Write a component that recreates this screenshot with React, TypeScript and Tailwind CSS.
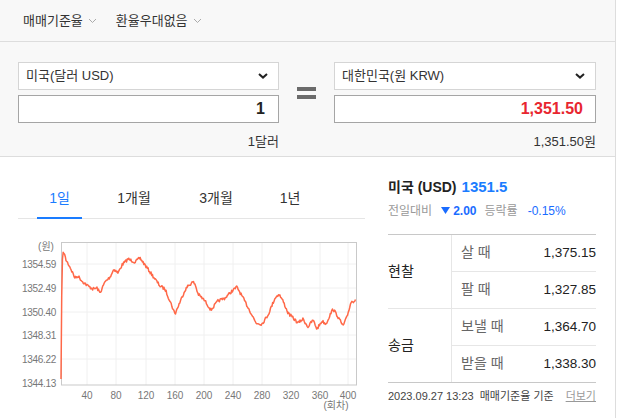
import React from "react";

const FONT = "font-['Liberation_Sans','Noto_Sans_CJK_KR',sans-serif]";

const KEYS: [number, number][] = [
  [61, 378], [62, 262], [63.5, 250], [66, 259], [70, 266], [75, 277], [78, 275], [82, 280],
  [88, 285], [93, 288], [97, 287], [100, 292], [105, 281], [110, 276], [114, 268], [118, 272],
  [122, 264], [128, 258], [135, 261], [140, 257], [145, 264], [150, 271], [155, 278], [160, 285],
  [165, 288], [170, 300], [175, 313], [180, 301], [185, 289], [188, 285], [193, 281], [195, 283],
  [198, 293], [205, 300], [211, 309], [218, 300], [225, 297], [232, 290], [237, 286], [243, 297],
  [250, 310], [256, 322], [262, 323], [268, 314], [275, 297], [279, 293], [283, 300], [288, 312],
  [294, 318], [298, 322], [303, 318], [308, 326], [313, 319], [317, 328], [322, 320], [326, 323],
  [330, 314], [333, 308], [337, 314], [343, 325], [347, 316], [351, 301], [354, 300], [356, 297],
];

function buildLine() {
  let seed = 7;
  const rand = () => {
    seed = (seed * 16807) % 2147483647;
    return seed / 2147483647;
  };
  const pts: string[] = [];
  for (let x = 61; x <= 356; x += 0.72) {
    let i = 0;
    while (i < KEYS.length - 2 && KEYS[i + 1][0] < x) i++;
    const [x0, y0] = KEYS[i];
    const [x1, y1] = KEYS[i + 1];
    const t = Math.min(1, Math.max(0, (x - x0) / (x1 - x0)));
    const noise = x < 62.5 ? 0 : (rand() - 0.5) * 3;
    pts.push(`${x.toFixed(2)},${(y0 + (y1 - y0) * t + noise).toFixed(2)}`);
  }
  return pts.join(" ");
}

const LINE = buildLine();

const Y_LABELS: [string, number][] = [
  ["1354.59", 263],
  ["1352.49", 287],
  ["1350.40", 311],
  ["1348.31", 334],
  ["1346.22", 358],
  ["1344.13", 382],
];
const X_LABELS: [string, number][] = [
  ["40", 87], ["80", 116], ["120", 146], ["160", 175], ["200", 204],
  ["240", 233], ["280", 262], ["320", 291], ["360", 320], ["400", 348],
];

function SmallChevron() {
  return (
    <svg width="9" height="6" viewBox="0 0 9 6" className="ml-[5px] mt-[1px]">
      <path d="M1 1l3.5 3.5L8 1" fill="none" stroke="#aaa" strokeWidth="1" />
    </svg>
  );
}

function SelectBox({ label }: { label: string }) {
  return (
    <div className="flex h-[28px] items-center justify-between border border-[#d5d5d5] bg-white pl-[7px] pr-[10px]">
      <span className="text-[13px] text-[#333]">{label}</span>
      <svg width="10" height="6" viewBox="0 0 10 6">
        <path d="M1 1l4 3.6L9 1" fill="none" stroke="#222" strokeWidth="2" />
      </svg>
    </div>
  );
}

function Chart() {
  return (
    <svg width="347" height="190" viewBox="18 228 347 190" className="mt-[10px] block">
      {Y_LABELS.slice(0, 5).map(([, y]) => (
        <line key={y} x1="61" x2="356" y1={y} y2={y} stroke="#f0f0f0" strokeWidth="1" />
      ))}
      {X_LABELS.map(([, x]) => (
        <line key={x} x1={x} x2={x} y1="241" y2="384" stroke="#f0f0f0" strokeWidth="1" />
      ))}
      <rect x="61.5" y="241.5" width="295" height="142.5" fill="none" stroke="#c9c9c9" strokeWidth="1" />
      <polyline points={LINE} fill="none" stroke="#ff6848" strokeWidth="1.5" strokeLinejoin="round" />
      <g fontSize="10" fill="#777" fontFamily="Liberation Sans, Noto Sans CJK KR, sans-serif">
        <text x="46" y="249" textAnchor="middle">(원)</text>
        {Y_LABELS.map(([t, y]) => (
          <text key={t} x="56" y={y + 4} textAnchor="end" letterSpacing="-0.3">{t}</text>
        ))}
        {X_LABELS.map(([t, x]) => (
          <text key={t} x={x} y="398" textAnchor="middle">{t}</text>
        ))}
        <text x="336" y="408" textAnchor="middle">(회차)</text>
      </g>
    </svg>
  );
}

const ROWS = [
  { group: "현찰", items: [["살 때", "1,375.15"], ["팔 때", "1,327.85"]] },
  { group: "송금", items: [["보낼 때", "1,364.70"], ["받을 때", "1,338.30"]] },
];

export default function App() {
  return (
    <div className={`${FONT} h-[418px] w-[617px] overflow-hidden bg-white`}>
      <div className="h-[418px] w-[616px] border-r border-[#ddd]">
        <div className="flex h-[42px] items-center gap-[19px] border-b border-[#ddd] bg-[#f8f8f8] pl-[23px]">
          <div className="flex items-center text-[13px] text-[#333]">
            매매기준율 <SmallChevron />
          </div>
          <div className="flex items-center text-[13px] text-[#333]">
            환율우대없음 <SmallChevron />
          </div>
        </div>

        <div className="flex h-[115px] items-start border-b border-[#ddd] bg-[#f8f8f8] px-[18px] pt-[20px]">
          <div className="w-[261px]">
            <SelectBox label="미국(달러 USD)" />
            <div className="mt-[5px] flex h-[28px] items-center justify-end border border-[#a5a5a5] bg-white pr-[13px] text-[16px] font-bold text-[#222]">
              1
            </div>
            <div className="mt-[9px] text-right text-[13px] text-[#333]">1달러</div>
          </div>
          <div className="mx-[18px] mt-[25px] flex w-[19px] flex-col gap-[4px]">
            <div className="h-[4px] bg-[#6b6b6b]" />
            <div className="h-[4px] bg-[#6b6b6b]" />
          </div>
          <div className="w-[262px]">
            <SelectBox label="대한민국(원 KRW)" />
            <div className="mt-[5px] flex h-[28px] items-center justify-end border border-[#a5a5a5] bg-white pr-[12px] text-[16px] font-bold text-[#e8262f]">
              1,351.50
            </div>
            <div className="mt-[9px] text-right text-[13px] text-[#333]">1,351.50원</div>
          </div>
        </div>

        <div className="flex pl-[18px]">
          <div className="w-[347px]">
            <div className="flex h-[62px] items-end border-b border-[#e5e5e5] pl-[19px]">
              <div className="relative flex h-[30px] w-[45px] items-start justify-center text-[14px] leading-[20px] text-[#1a7cff]">
                1일
                <div className="absolute bottom-[-1px] left-0 right-0 h-[2px] bg-[#1a7cff]" />
              </div>
              <div className="ml-[22px] flex h-[30px] w-[60px] items-start justify-center text-[14px] leading-[20px] text-[#333]">1개월</div>
              <div className="ml-[22px] flex h-[30px] w-[60px] items-start justify-center text-[14px] leading-[20px] text-[#333]">3개월</div>
              <div className="ml-[20px] flex h-[30px] w-[48px] items-start justify-center text-[14px] leading-[20px] text-[#333]">1년</div>
            </div>
            <Chart />
          </div>

          <div className="ml-[23px] w-[208px]">
            <div className="mt-[19px] flex items-baseline whitespace-nowrap">
              <span className="text-[14px] font-bold text-[#222]">미국 (USD)</span>
              <span className="ml-[5px] text-[15px] font-bold text-[#1a7cff]">1351.5</span>
            </div>
            <div className="mt-[3px] flex items-center whitespace-nowrap text-[12px]">
              <span className="text-[#999]">전일대비</span>
              <svg width="9" height="7" viewBox="0 0 9 7" className="ml-[9px]">
                <path d="M0 0h9L4.5 7z" fill="#1a6cff" />
              </svg>
              <span className="ml-[3px] font-bold text-[#1a6cff]">2.00</span>
              <span className="ml-[8px] text-[#999]">등락률</span>
              <span className="ml-[10px] text-[#1a6cff]">-0.15%</span>
            </div>
            <div className="mt-[14px] border-t border-b border-[#c8c8c8]">
              {ROWS.map((g, gi) => (
                <div key={g.group} className={`flex ${gi > 0 ? "border-t border-[#e6e6e6]" : ""}`}>
                  <div className="flex w-[64px] items-center border-r border-[#e6e6e6] text-[14px] text-[#222]">
                    {g.group}
                  </div>
                  <div className="flex-1">
                    {g.items.map(([k, v], i) => (
                      <div
                        key={k}
                        className={`flex h-[36.5px] items-center justify-between pl-[9px] ${i > 0 ? "border-t border-[#e6e6e6]" : ""}`}
                      >
                        <span className="text-[14px] text-[#666]">{k}</span>
                        <span className="text-[13.5px] text-[#222]">{v}</span>
                      </div>
                    ))}
                  </div>
                </div>
              ))}
            </div>
            <div className="mt-[5px] flex items-center justify-between whitespace-nowrap text-[11px]">
              <span className="text-[#444]">2023.09.27 13:23&nbsp; 매매기준율 기준</span>
              <span className="text-[#999] underline">더보기</span>
            </div>
          </div>
        </div>
      </div>
    </div>
  );
}
